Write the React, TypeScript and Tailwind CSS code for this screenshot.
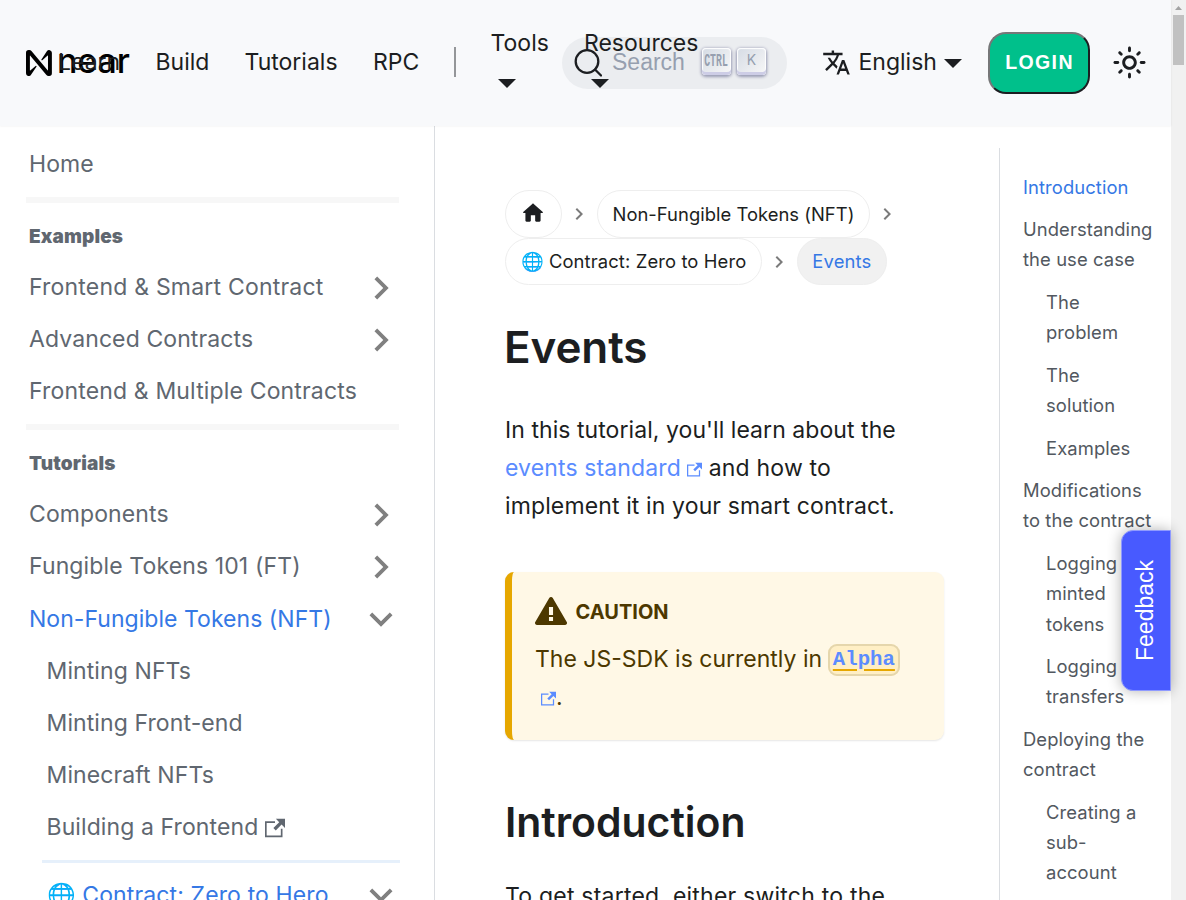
import React from "react";

const CHEVRON = "M8.59 16.59 13.17 12 8.59 7.41 10 6l6 6-6 6-1.41-1.41z";
const EXTERNAL =
  "M21 13v10h-21v-19h12v2h-10v15h17v-8h2zm3-12h-10.988l4.035 4-6.977 7.07 2.828 2.828 6.977-7.07 4.125 4.172v-11z";
const SUN =
  "M12,9c1.65,0,3,1.35,3,3s-1.35,3-3,3s-3-1.35-3-3S10.35,9,12,9 M12,7c-2.76,0-5,2.24-5,5s2.24,5,5,5s5-2.24,5-5 S14.76,7,12,7L12,7z M2,13l2,0c0.55,0,1-0.45,1-1s-0.45-1-1-1l-2,0c-0.55,0-1,0.45-1,1S1.45,13,2,13z M20,13l2,0c0.55,0,1-0.45,1-1 s-0.45-1-1-1l-2,0c-0.55,0-1,0.45-1,1S19.45,13,20,13z M11,2v2c0,0.55,0.45,1,1,1s1-0.45,1-1V2c0-0.55-0.45-1-1-1S11,1.45,11,2z M11,20v2c0,0.55,0.45,1,1,1s1-0.45,1-1v-2c0-0.55-0.45-1-1-1C11.45,19,11,19.45,11,20z M5.99,4.58c-0.39-0.39-1.03-0.39-1.41,0 c-0.39,0.39-0.39,1.03,0,1.41l1.06,1.06c0.39,0.39,1.03,0.39,1.41,0s0.39-1.03,0-1.41L5.99,4.58z M18.36,16.95 c-0.39-0.39-1.03-0.39-1.41,0c-0.39,0.39-0.39,1.03,0,1.41l1.06,1.06c0.39,0.39,1.03,0.39,1.41,0c0.39-0.39,0.39-1.03,0-1.41 L18.36,16.95z M19.42,5.99c0.39-0.39,0.39-1.03,0-1.41c-0.39-0.39-1.03-0.39-1.41,0l-1.06,1.06c-0.39,0.39-0.39,1.03,0,1.41 s1.03,0.39,1.41,0L19.42,5.99z M7.05,18.36c0.39-0.39,0.39-1.03,0-1.41c-0.39-0.39-1.03-0.39-1.41,0l-1.06,1.06 c-0.39,0.39-0.39,1.03,0,1.41s1.03,0.39,1.41,0L7.05,18.36z";
const TRANSLATE =
  "M12.87 15.07l-2.54-2.51.03-.03c1.74-1.94 2.98-4.17 3.71-6.53H17V4h-7V2H8v2H1v1.99h11.17C11.5 7.92 10.44 9.75 9 11.35 8.07 10.32 7.3 9.19 6.69 8h-2c.73 1.63 1.73 3.17 2.98 4.56l-5.09 5.02L4 19l5-5 3.11 3.11.76-2.04zM18.5 10h-2L12 22h2l1.12-3h4.75L21 22h2l-4.5-12zm-2.62 7l1.62-4.33L19.12 17h-3.24z";
const HOME =
  "M10 19v-5h4v5c0 .55.45 1 1 1h3c.55 0 1-.45 1-1v-7h1.7c.46 0 .68-.57.33-.87L12.67 3.6c-.38-.34-.96-.34-1.34 0l-8.36 7.53c-.34.3-.13.87.33.87H5v7c0 .55.45 1 1 1h3c.55 0 1-.45 1-1z";
const WARNING =
  "M8.893 1.5c-.183-.31-.52-.5-.887-.5s-.703.19-.886.5L.138 13.499a.98.98 0 0 0 0 1.001c.193.31.53.501.886.501h13.964c.367 0 .704-.19.877-.5a1.03 1.03 0 0 0 .01-1.002L8.893 1.5zm.133 11.497H6.987v-2.003h2.039v2.003zm0-3.004H6.987V5.987h2.039v4.006z";

function Icon({ d, box = "0 0 24 24", className }: { d: string; box?: string; className: string }) {
  return (
    <svg viewBox={box} fill="currentColor" className={className}>
      <path d={d} />
    </svg>
  );
}

function Caret() {
  return (
    <svg viewBox="0 0 18 9" className="block h-[9px] w-[18px]" fill="currentColor">
      <path d="M0 0h18L9 9z" />
    </svg>
  );
}

function Logo() {
  return (
    <div className="absolute left-[26px] top-[40px] flex h-[44px] items-center text-black">
      <svg viewBox="0 0 90 90" className="mt-px h-[26px] w-[26px]" fill="currentColor">
        <path d="M72.2 4.6 53.4 32.5a2 2 0 0 0 3 2.6L74.9 19a.8.8 0 0 1 1.2.6v50.3a.8.8 0 0 1-1.3.5L18.9 3.5A9.9 9.9 0 0 0 11.4 0H9.4A9.4 9.4 0 0 0 0 9.4v71.200a9.400 9.400 0 0 0 17.400 4.900l18.800-27.900a2 2 0 0 0-3-2.600L14.700 71a.8.8 0 0 1-1.200-.6V20.100a.8.8 0 0 1 1.300-.5l55.900 66.900a9.900 9.900 0 0 0 7.500 3.500h2a9.400 9.400 0 0 0 9.400-9.400V9.400A9.400 9.400 0 0 0 72.200 4.600z" />
      </svg>
      <span className="ml-[5px] -mt-[3px] text-[34px] font-medium leading-[44px] tracking-[-0.100px]">near</span>
    </div>
  );
}

function Key({ children }: { children: React.ReactNode }) {
  return (
    <kbd className="flex h-[27px] w-[29px] items-center justify-center rounded-[4px] bg-[linear-gradient(-225deg,#d5dbe4,#f8f8f8)] pb-[2px] text-[#969faf] shadow-[inset_0_-3px_0_0_#cdcde6,inset_0_0_1px_1px_#fff,0_1px_3px_1px_rgba(30,35,90,0.4)]">
      {children}
    </kbd>
  );
}

function Header() {
  return (
    <header className="relative z-10 flex h-[126px] w-full shrink-0 items-center bg-[#f8f9fb] text-[23px] leading-[38px] text-[#1c1e21] shadow-[0_0_2px_0_rgba(0,0,0,0.08)]">
      <Logo />
      <nav className="relative z-10 flex w-[562px] shrink-0 items-center pb-[2px] pl-[58px]">
        <a className="w-[97.500px] shrink-0">Learn</a>
        <a className="w-[89px] shrink-0">Build</a>
        <a className="w-[128.500px] shrink-0">Tutorials</a>
        <a className="w-[81px] shrink-0">RPC</a>
        <span className="h-[30px] w-[2px] shrink-0 bg-[#949699]" />
        <a className="flex h-[76px] w-[93px] shrink-0 flex-col pl-[34.500px]">
          Tools
          <span className="ml-[7.500px] mt-[17px]"><Caret /></span>
        </a>
        <a className="ml-[35px] flex h-[76px] shrink-0 flex-col">
          Resources
          <span className="ml-[7px] mt-[17px]"><Caret /></span>
        </a>
      </nav>
      <button className="flex h-[52px] w-[225px] shrink-0 items-center rounded-full bg-[#ebedf0] pl-[12px] font-['Liberation_Sans',sans-serif] text-[#969faf]">
        <svg viewBox="0 0 28 28" className="h-[28px] w-[28px] text-[#1c1e21]" fill="none" stroke="currentColor" strokeWidth="2.3" strokeLinecap="round">
          <circle cx="13" cy="12.500" r="11.300" />
          <path d="M21 20.500l6 6" />
        </svg>
        <span className="-mt-[2px] ml-[10px] w-[90px] text-left">Search</span>
        <span className="flex gap-[6px] pb-[3px]">
          <Key><span className="-mx-4 block scale-x-[0.56] text-[17.500px] font-bold leading-[18px]">CTRL</span></Key>
          <Key><span className="-mt-[2px] block font-['Inter',sans-serif] text-[14px] leading-[16px]">K</span></Key>
        </span>
      </button>
      <a className="ml-[35px] flex shrink-0 items-center pb-[2px]">
        <Icon d={TRANSLATE} className="h-[29px] w-[29px]" />
        <span className="ml-[7.500px] w-[85.500px]">English</span>
        <span className="mt-[3px]"><Caret /></span>
      </a>
      <button className="ml-[26px] h-[62px] w-[102px] shrink-0 rounded-[18px] border-2 border-[#1c1e21] border-l-[#767778] border-t-[#767778] bg-[#00c08b] pb-[2px] pl-[1px] font-['Liberation_Sans',sans-serif] text-[19.500px] font-bold tracking-[1.400px] text-white">
        LOGIN
      </button>
      <Icon d={SUN} className="mb-[2px] ml-[22px] h-[35px] w-[35px] shrink-0" />
    </header>
  );
}

type RowProps = {
  label: string;
  arrow?: "right" | "down";
  active?: boolean;
  nested?: boolean;
  external?: boolean;
  tracking?: string;
};

function Row({ label, arrow, active, nested, external, tracking = "tracking-[0.1px]" }: RowProps) {
  return (
    <li className={`flex h-[52.200px] items-center ${nested ? "pl-[46.500px]" : "pl-[29px]"} ${active ? "text-[#3578e5]" : ""}`}>
      <span className={`flex items-center whitespace-nowrap ${active ? "mt-[2px]" : "mt-[1.200px]"} ${tracking}`}>
        {label}
        {external && <Icon d={EXTERNAL} className="ml-[6.500px] h-[20px] w-[20px]" />}
      </span>
      {arrow && (
        <Icon
          d={CHEVRON}
          className={`ml-auto mr-[30px] mt-[1.500px] h-[46px] w-[46px] shrink-0 text-[#808080] ${arrow === "down" ? "rotate-90" : ""}`}
        />
      )}
    </li>
  );
}

function Sidebar() {
  return (
    <aside className="w-[435px] shrink-0 overflow-hidden border-r border-[#dadde1] text-[23px] leading-[29px] text-[#606770]">
      <ul className="pt-[11.500px]">
        <Row label="Home" />
        <li className="ml-[26px] mr-[35px] mt-[7px] h-[6px] bg-[#f7f7f7]" />
        <li className="flex h-[58px] items-center pl-[29px] pt-[9px] text-[19px] font-black tracking-[0.150px]">Examples</li>
        <Row label="Frontend & Smart Contract" arrow="right" tracking="tracking-[0.2px]" />
        <Row label="Advanced Contracts" arrow="right" />
        <Row label="Frontend & Multiple Contracts" tracking="tracking-[0.155px]" />
        <li className="ml-[26px] mr-[35px] mt-[6.500px] h-[6px] bg-[#f7f7f7]" />
        <li className="flex h-[58px] items-center pl-[29px] pt-[9px] text-[19px] font-black tracking-[0.150px]">Tutorials</li>
        <Row label="Components" arrow="right" />
        <Row label="Fungible Tokens 101 (FT)" arrow="right" tracking="tracking-[0.125px]" />
        <Row label="Non-Fungible Tokens (NFT)" arrow="down" active tracking="tracking-[0.04px]" />
        <Row label="Minting NFTs" nested />
        <Row label="Minting Front-end" nested />
        <Row label="Minecraft NFTs" nested />
        <Row label="Building a Frontend" nested external />
        <li className="ml-[42px] mr-[34px] mt-[7px] h-[3px] bg-[#e6f0fb]" />
        <li className="h-[5px]" />
        <Row label="🌐 Contract: Zero to Hero" nested arrow="down" active tracking="tracking-[0.13px]" />
      </ul>
    </aside>
  );
}

function Crumb({ children, className = "" }: { children: React.ReactNode; className?: string }) {
  return (
    <span className={`flex h-[47.500px] items-center whitespace-nowrap rounded-full border border-[#eeeeee] px-[14.500px] ${className}`}>
      {children}
    </span>
  );
}

function Separator() {
  return <Icon d={CHEVRON} className="mt-px ml-[5px] mr-[6px] h-[24px] w-[24px] shrink-0 text-[#7b7b7b]" />;
}

function Article() {
  return (
    <main className="w-[564px] shrink-0 overflow-hidden pl-[70px] pt-[64px] text-[23px] leading-[38px] text-[#1c1e21]">
      <div className="text-[18.400px] leading-[30px]">
        <div className="flex items-center">
          <Crumb><Icon d={HOME} className="-ml-px mb-[2px] mr-px h-[26px] w-[26px]" /></Crumb>
          <Separator />
          <Crumb className="tracking-[0.03px]">Non-Fungible Tokens (NFT)</Crumb>
          <Separator />
        </div>
        <div className="flex items-center">
          <Crumb className="tracking-[0.12px]">🌐 Contract: Zero to Hero</Crumb>
          <Separator />
          <Crumb className="bg-[#f1f1f1] tracking-[0.15px] text-[#3578e5]">Events</Crumb>
        </div>
      </div>
      <h1 className="-ml-px mt-[34px] text-[44px] font-semibold leading-[56px] tracking-[-0.100px]">Events</h1>
      <p className="mt-[36px] whitespace-nowrap">
        <span className="tracking-[0.06px]">In this tutorial, you'll learn about the</span>
        <br />
        <span className="tracking-[0.13px] text-[#5b8cff]">
          events standard <Icon d={EXTERNAL} className="-ml-[0.500px] inline h-[15px] w-[15px] align-[-1px]" />
        </span>
        <span className="tracking-[0.2px]"> and how to</span>
        <br />
        <span className="tracking-[0.125px]">implement it in your smart contract.</span>
      </p>
      <section className="mt-[47px] h-[168px] w-[439px] rounded-[9px] border-l-[7px] border-[#e6a700] bg-[#fff8e6] pl-[23px] pt-[23px] text-[#4d3800] shadow-[0_1px_2px_0_rgba(0,0,0,0.1)]">
        <div className="flex h-[34px] items-center text-[20px] font-bold leading-[30px]">
          <Icon box="0 0 16 16" d={WARNING} className="mb-[2px] mr-[8.500px] h-[32px] w-[32px]" />
          CAUTION
        </div>
        <p className="mt-[11px] whitespace-nowrap">
          The JS-SDK is currently in{" "}
          <code className="-ml-[0.500px] rounded-[9px] border-2 border-[#e5d6ac] bg-[#ffefc5] px-[2.800px] py-[2.300px] align-middle font-['Liberation_Mono',monospace] text-[20.700px] font-bold leading-[20px] text-[#5b8cff] underline decoration-[#e6a700] decoration-2 underline-offset-[3px]">
            Alpha
          </code>
          <br />
          <Icon d={EXTERNAL} className="ml-[6px] inline h-[15px] w-[15px] align-[-1px] text-[#5b8cff]" />.
        </p>
      </section>
      <h2 className="mt-[56px] text-[40.900px] font-semibold leading-[52px]">Introduction</h2>
      <p className="mt-[29px] whitespace-nowrap tracking-[0.22px]">To get started, either switch to the</p>
    </main>
  );
}

const toc: { lines: string[]; nested?: boolean; active?: boolean }[] = [
  { lines: ["Introduction"], active: true },
  { lines: ["Understanding", "the use case"] },
  { lines: ["The", "problem"], nested: true },
  { lines: ["The", "solution"], nested: true },
  { lines: ["Examples"], nested: true },
  { lines: ["Modifications", "to the contract"] },
  { lines: ["Logging", "minted", "tokens"], nested: true },
  { lines: ["Logging", "transfers"], nested: true },
  { lines: ["Deploying the", "contract"] },
  { lines: ["Creating a", "sub-", "account"], nested: true },
];

function Toc() {
  return (
    <aside className="mt-[22px] flex w-[172px] shrink-0 flex-col gap-[12.130px] border-l border-[#dadde1] pl-[23px] pt-[23.500px] text-[18.400px] leading-[30.360px] tracking-[0.090px] text-[#525860]">
      {toc.map((item, i) => (
        <a key={i} className={`block shrink-0 whitespace-nowrap ${item.nested ? "pl-[23px]" : ""} ${item.active ? "text-[#3578e5]" : ""}`}>
          {item.lines.map((line) => (
            <span key={line} className="block">{line}</span>
          ))}
        </a>
      ))}
    </aside>
  );
}

export default function App() {
  return (
    <div className="relative flex h-[900px] w-[1186px] overflow-hidden bg-white font-['Inter',sans-serif]">
      <div className="flex h-full w-[1171px] flex-col">
        <Header />
        <div className="flex min-h-0 flex-1 overflow-hidden">
          <Sidebar />
          <Article />
          <Toc />
        </div>
      </div>
      <div className="flex w-[15px] flex-col items-center bg-[#f1f1f1]">
        <svg viewBox="0 0 15 15" className="h-[15px] w-[15px]" fill="#a3a3a3">
          <path d="M4 10h7L7.500 6z" />
        </svg>
        <span className="h-[50px] w-[11px] bg-[#c1c1c1]" />
      </div>
      <button className="absolute left-[1121px] top-[530px] z-20 flex h-[161px] w-[50px] rotate-180 items-center justify-center rounded-r-[12px] border border-[#8f9aff] bg-[#485aff] pl-px font-['Liberation_Sans',sans-serif] text-[23px] text-white shadow-[0_0_14px_rgba(0,0,0,0.3)] [writing-mode:vertical-rl]">
        Feedback
      </button>
    </div>
  );
}
